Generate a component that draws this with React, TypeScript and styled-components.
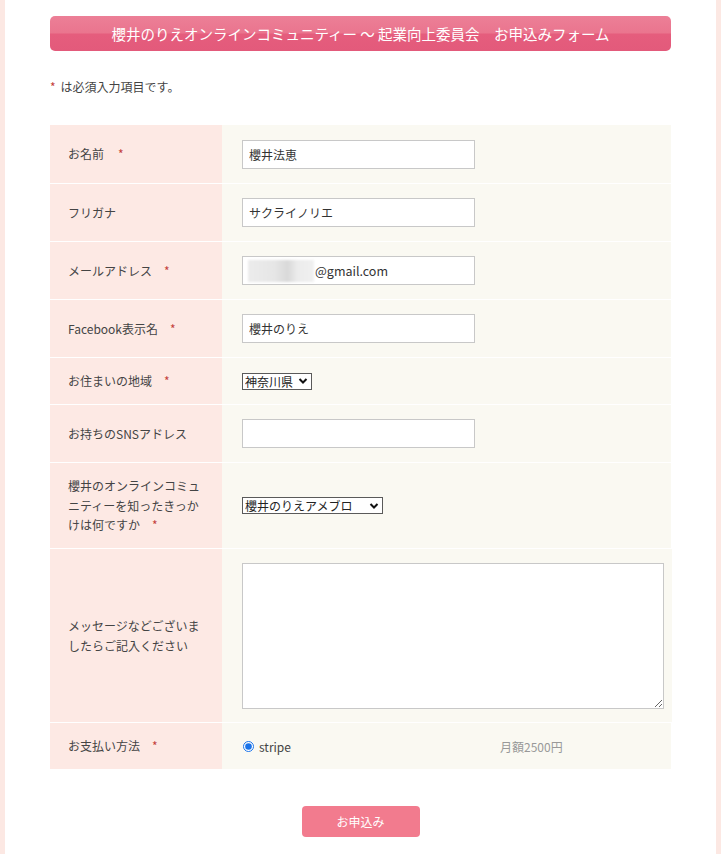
import React from "react";
import styled, { createGlobalStyle } from "styled-components";

const FONT = `"Noto Sans CJK JP", "Noto Sans", "Liberation Sans", sans-serif`;

const GlobalStyle = createGlobalStyle`
  html, body { margin: 0; padding: 0; }
  body {
    background: #fce8e3;
    font-family: ${FONT};
    color: #444;
  }
  * { box-sizing: border-box; }
`;

const Page = styled.div`
  width: 711px;
  min-height: 854px;
  margin: 0 auto;
  background: #fff;
  padding: 16px 45px 17px;
`;

const Header = styled.h1`
  margin: 0;
  height: 35px;
  border-radius: 5px;
  background: linear-gradient(#ec7f97 0%, #ea758e 48%, #e55d7d 52%, #e35a7b 100%);
  color: #fff;
  font-size: 14.5px;
  font-weight: normal;
  display: flex;
  align-items: center;
  justify-content: center;
  letter-spacing: 0;
`;

const Note = styled.p`
  margin: 27px 0 0;
  font-size: 12px;
  line-height: 18px;
  color: #444;
`;

const Req = styled.span<{ $gap?: number }>`
  color: #c4403a;
  margin-left: ${(p) => p.$gap ?? 0}px;
  margin-right: ${(p) => (p.$gap ? 0 : 5)}px;
`;

const Table = styled.div`
  margin-top: 29px;
  display: flex;
  flex-direction: column;
`;

const Row = styled.div<{ $h: number; $first?: boolean }>`
  display: grid;
  grid-template-columns: 172px 1fr;
  min-height: ${(p) => p.$h}px;
  border-top: ${(p) => (p.$first ? "none" : "1px solid rgba(255,255,255,0.75)")};
`;

const Label = styled.div`
  background: #fde9e4;
  padding: 0 20px 0 18px;
  display: flex;
  align-items: center;
  font-size: 12px;
  line-height: 19.5px;
  color: #444;
`;

const Value = styled.div`
  background: #faf9f2;
  padding: 0 8px 0 20px;
  display: flex;
  align-items: center;
`;

const TextInput = styled.input`
  width: 233px;
  height: 29px;
  border: 1px solid #c8c8c8;
  background: #fff;
  padding: 0 6px;
  font-family: ${FONT};
  font-size: 12px;
  color: #333;
  outline: none;
`;

const FakeInput = styled.div`
  width: 233px;
  height: 29px;
  border: 1px solid #c8c8c8;
  background: #fff;
  padding: 0 5px;
  display: flex;
  align-items: center;
  font-size: 12.5px;
  color: #333;
`;

const Redacted = styled.span`
  display: inline-block;
  width: 66px;
  height: 22px;
  margin-right: 1px;
  background: linear-gradient(90deg, #ececec 0%, #e6e6e6 40%, #d9d9d9 60%, #ececec 75%, #f0f0f0 100%);
  filter: blur(1px);
`;

const SelectBox = styled.span<{ $w: number }>`
  display: inline-flex;
  align-items: center;
  width: ${(p) => p.$w}px;
  height: 17px;
  border: 1px solid #5a5a5a;
  background: #fff;
  margin-left: 0;
`;

const NativeSelect = styled.select`
  appearance: none;
  -webkit-appearance: none;
  border: none;
  background: transparent;
  font-family: ${FONT};
  font-size: 12px;
  line-height: 15px;
  height: 15px;
  padding: 0 0 0 2px;
  color: #222;
  flex: 1;
  outline: none;
  min-width: 0;
`;

const Chevron = styled.svg`
  width: 10px;
  height: 10px;
  margin-right: 3px;
  flex: none;
`;

const TextArea = styled.textarea`
  width: 422px;
  height: 146px;
  border: 1px solid #c8c8c8;
  background: #fff;
  font-family: ${FONT};
  font-size: 12px;
  outline: none;
`;

const Payment = styled.div`
  display: flex;
  align-items: center;
`;

const RadioLabel = styled.label`
  width: 258px;
  display: flex;
  align-items: center;
  font-size: 12px;
  color: #444;
`;

const Radio = styled.input`
  margin: 0 5px 0 1px;
  width: 11px;
  height: 11px;
  accent-color: #1a73e8;
`;

const Price = styled.span`
  font-size: 12px;
  color: #999;
`;

const Actions = styled.div`
  margin-top: 37px;
  display: flex;
  justify-content: center;
`;

const Submit = styled.button`
  width: 118px;
  height: 31px;
  border: none;
  border-radius: 4px;
  background: #f27b8e;
  color: #fff;
  font-family: ${FONT};
  font-size: 12px;
  cursor: pointer;
`;

const Select: React.FC<{ w: number; value: string }> = ({ w, value }) => (
  <SelectBox $w={w}>
    <NativeSelect defaultValue={value}>
      <option>{value}</option>
    </NativeSelect>
    <Chevron viewBox="0 0 10 10">
      <path d="M1.5 3 L5 6.5 L8.5 3" fill="none" stroke="#111" strokeWidth="2" />
    </Chevron>
  </SelectBox>
);

export default function App() {
  return (
    <>
      <GlobalStyle />
      <Page>
        <Header>櫻井のりえオンラインコミュニティー ～ 起業向上委員会　お申込みフォーム</Header>
        <Note>
          <Req>*</Req>は必須入力項目です。
        </Note>
        <Table>
          <Row $h={58} $first>
            <Label>
              <span>お名前<Req $gap={14}>*</Req></span>
            </Label>
            <Value>
              <TextInput defaultValue="櫻井法恵" />
            </Value>
          </Row>
          <Row $h={58}>
            <Label>フリガナ</Label>
            <Value>
              <TextInput defaultValue="サクライノリエ" />
            </Value>
          </Row>
          <Row $h={58}>
            <Label>
              <span>メールアドレス<Req $gap={12}>*</Req></span>
            </Label>
            <Value>
              <FakeInput>
                <Redacted />
                @gmail.com
              </FakeInput>
            </Value>
          </Row>
          <Row $h={58}>
            <Label>
              <span>Facebook表示名<Req $gap={12}>*</Req></span>
            </Label>
            <Value>
              <TextInput defaultValue="櫻井のりえ" />
            </Value>
          </Row>
          <Row $h={47}>
            <Label>
              <span>お住まいの地域<Req $gap={12}>*</Req></span>
            </Label>
            <Value>
              <Select w={70} value="神奈川県" />
            </Value>
          </Row>
          <Row $h={58}>
            <Label>お持ちのSNSアドレス</Label>
            <Value>
              <TextInput defaultValue="" />
            </Value>
          </Row>
          <Row $h={86}>
            <Label>
              <span>櫻井のオンラインコミュニティーを知ったきっかけは何ですか<Req $gap={12}>*</Req></span>
            </Label>
            <Value>
              <Select w={141} value="櫻井のりえアメブロ" />
            </Value>
          </Row>
          <Row $h={174}>
            <Label>メッセージなどございましたらご記入ください</Label>
            <Value>
              <TextArea />
            </Value>
          </Row>
          <Row $h={47}>
            <Label>
              <span>お支払い方法<Req $gap={12}>*</Req></span>
            </Label>
            <Value>
              <Payment>
                <RadioLabel>
                  <Radio type="radio" name="pay" defaultChecked />
                  stripe
                </RadioLabel>
                <Price>月額2500円</Price>
              </Payment>
            </Value>
          </Row>
        </Table>
        <Actions>
          <Submit type="button">お申込み</Submit>
        </Actions>
      </Page>
    </>
  );
}
